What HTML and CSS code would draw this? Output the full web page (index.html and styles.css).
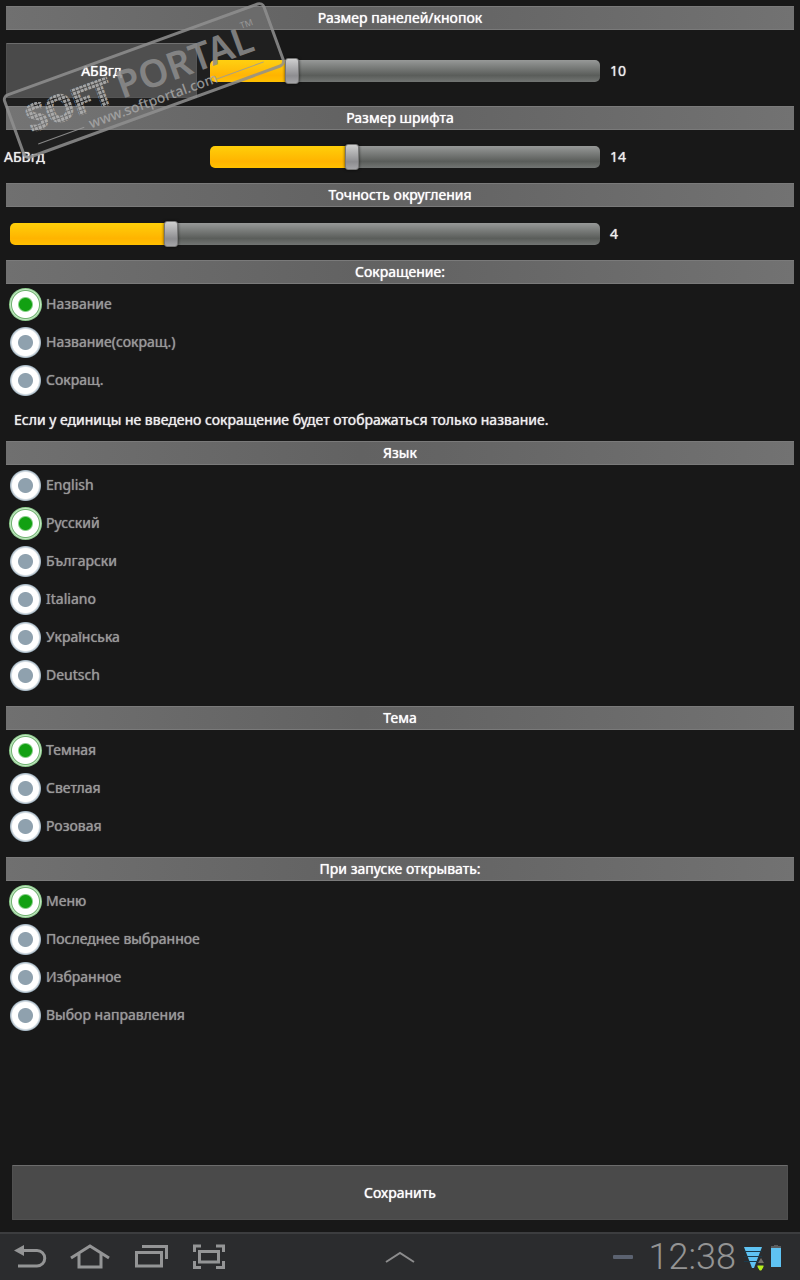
FILE: index.html
```html
<!DOCTYPE html>
<html lang="ru">
<head>
    <meta charset="UTF-8">
    <meta name="viewport" content="width=device-width, initial-scale=1.0">
    <title>Настройки</title>
    <link rel="stylesheet" href="styles.css">
</head>
<body>
    <form class="settings">
        <h2>Размер панелей/кнопок</h2>
        <div class="slider-row tall">
            <button type="button" class="btn sample">АБВгд</button>
            <input type="range" id="panelSize" aria-label="Размер панелей/кнопок" min="5" max="30" value="10" style="--fill: 20%">
            <output for="panelSize">10</output>
        </div>

        <h2>Размер шрифта</h2>
        <div class="slider-row">
            <span class="sample-text">АБВгд</span>
            <input type="range" id="fontSize" aria-label="Размер шрифта" min="5" max="30" value="14" style="--fill: 36%">
            <output for="fontSize">14</output>
        </div>

        <h2>Точность округления</h2>
        <div class="slider-row wide">
            <input type="range" id="precision" aria-label="Точность округления" min="0" max="15" value="4" style="--fill: 27%">
            <output for="precision">4</output>
        </div>

        <h2>Сокращение:</h2>
        <div class="radio-group">
            <label><input type="radio" name="short" checked>Название</label>
            <label><input type="radio" name="short">Название(сокращ.)</label>
            <label><input type="radio" name="short">Сокращ.</label>
        </div>
        <p class="note">Если у единицы не введено сокращение будет отображаться только название.</p>

        <h2>Язык</h2>
        <div class="radio-group spaced">
            <label><input type="radio" name="lang">English</label>
            <label><input type="radio" name="lang" checked>Русский</label>
            <label><input type="radio" name="lang">Български</label>
            <label><input type="radio" name="lang">Italiano</label>
            <label><input type="radio" name="lang">Українська</label>
            <label><input type="radio" name="lang">Deutsch</label>
        </div>

        <h2>Тема</h2>
        <div class="radio-group spaced">
            <label><input type="radio" name="theme" checked>Темная</label>
            <label><input type="radio" name="theme">Светлая</label>
            <label><input type="radio" name="theme">Розовая</label>
        </div>

        <h2>При запуске открывать:</h2>
        <div class="radio-group">
            <label><input type="radio" name="start" checked>Меню</label>
            <label><input type="radio" name="start">Последнее выбранное</label>
            <label><input type="radio" name="start">Избранное</label>
            <label><input type="radio" name="start">Выбор направления</label>
        </div>

        <button type="submit" class="btn save">Сохранить</button>
    </form>

    <nav class="system-bar">
        <div class="nav-keys">
            <button type="button" aria-label="Назад">
                <svg width="40" height="32" viewBox="0 0 40 32">
                    <path d="M13 9.500H27a7.500 7.500 0 0 1 0 15.500H8" fill="none" stroke="#949596" stroke-width="3"/>
                    <path d="M4 9.500L14 4V15Z" fill="#949596"/>
                </svg>
            </button>
            <button type="button" aria-label="Домой">
                <svg width="40" height="32" viewBox="0 0 40 32">
                    <path d="M1 17L20 5L39 17M9 13V26H31V13" fill="none" stroke="#949596" stroke-width="3"/>
                </svg>
            </button>
            <button type="button" aria-label="Недавние">
                <svg width="40" height="32" viewBox="0 0 40 32">
                    <path d="M6.500 11.500H31.500V25H6.500ZM12 5.500H36.500V18" fill="none" stroke="#949596" stroke-width="3"/>
                </svg>
            </button>
            <button type="button" aria-label="Снимок экрана">
                <svg width="40" height="32" viewBox="0 0 40 32">
                    <path d="M9.500 10.500H28.500V21H9.500Z" fill="none" stroke="#949596" stroke-width="3"/>
                    <path d="M4.500 11V5H11M26 5H33.500V11M33.500 20V26.500H26M11 26.500H4.500V20" fill="none" stroke="#949596" stroke-width="3"/>
                </svg>
            </button>
        </div>
        <button type="button" class="up" aria-label="Вверх">
            <svg width="32" height="16" viewBox="0 0 32 16">
                <path d="M2 13L16 4L30 13" fill="none" stroke="#8c8c8d" stroke-width="2"/>
            </svg>
        </button>
        <div class="status">
            <span class="dash"></span>
            <time>12:38</time>
            <svg width="21" height="28" viewBox="0 0 21 28">
                <path d="M0 4H18L10 25H8Z" fill="#5fc3f3"/>
                <path d="M0 8.500H18M0 13.500H18M0 18.500H18" stroke="#1c3a4a" stroke-width="1"/>
                <path d="M14 20L17 15L20 20Z" fill="#77706a"/>
                <path d="M13 22H20V24L17.500 28H15.500L13 24Z" fill="#b8ee1c" stroke="#2b2c2e" stroke-width="1"/>
            </svg>
            <svg width="12" height="28" viewBox="0 0 12 28">
                <path d="M1 5V3H4V2H8V3H11V5Z" fill="#5b5c5e"/>
                <path d="M1 5H11V24H1Z" fill="#5fc3f3"/>
            </svg>
        </div>
    </nav>

    <!-- watermark -->
    <svg class="stamp" width="300" height="180" viewBox="0 0 300 180">
        <defs>
            <pattern id="dots" width="4" height="4" patternUnits="userSpaceOnUse">
                <rect width="3" height="3" fill="#b4b4b4"/>
            </pattern>
        </defs>
        <g transform="translate(2 97) rotate(-20)">
            <rect x="1" y="0" width="276" height="66" rx="5" fill="#ffffff" fill-opacity="0.04" stroke="#909090" stroke-width="3"/>
            <text x="16" y="43" class="stamp-soft" fill="url(#dots)" stroke="url(#dots)" stroke-width="2">SOFT</text>
            <text x="112" y="43" class="stamp-portal">PORTAL</text>
            <text x="248" y="18" class="stamp-tm">TM</text>
            <text x="73" y="60" class="stamp-url">www.softportal.com</text>
            <path d="M18 56.500H67M208 56.500H258" stroke="#9c9c9c" stroke-width="1"/>
        </g>
    </svg>

    <script>
        // keep the filled part and the number in step with the thumb
        document.querySelectorAll('input[type=range]').forEach(function (el) {
            el.addEventListener('input', function () {
                var part = (el.value - el.min) / (el.max - el.min);
                el.style.setProperty('--fill', Math.round(part * 100) + '%');
                el.nextElementSibling.value = el.value;
            });
        });
    </script>
</body>
</html>
```
FILE: styles.css
```css
* {
    margin: 0;
    padding: 0;
    box-sizing: border-box;
}

body {
    display: flex;
    flex-direction: column;
    min-height: 100vh;
    background: #181818;
    color: #eee;
    font-family: "Noto Sans", "Open Sans", sans-serif;
    font-size: 14px;
    font-weight: 400;
    line-height: 20px;
    text-shadow: 0 0 1px currentColor;
}

button {
    border: none;
    background: none;
    color: inherit;
    font: inherit;
    text-shadow: inherit;
    cursor: pointer;
}

.settings {
    flex: 1;
    display: flex;
    flex-direction: column;
    padding-top: 6px;
}

h2 {
    height: 24px;
    margin: 0 6px;
    border: 1px solid #7a7a7a;
    border-width: 1px 0;
    background: linear-gradient(to right, #707070, #626262 45%, #646464 55%, #727272);
    color: #fff;
    font-size: 14px;
    font-weight: 400;
    line-height: 22px;
    text-align: center;
}

.btn {
    border: 1px solid #505050;
    border-top-color: #6c6c6c;
    border-radius: 1px;
    background: #4a4a4a;
    color: #fff;
}

/* sliders */
.slider-row {
    display: grid;
    grid-template-columns: 1fr 2fr 1fr;
    align-items: center;
    height: 53px;
}

.slider-row.tall {
    height: 76px;
    padding-top: 5px;
}

.slider-row.wide {
    grid-template-columns: 3fr 1fr;
}

.sample {
    height: 55px;
    margin: 0 3px 0 6px;
}

.sample-text {
    padding-left: 4px;
}

.slider-row output {
    padding-left: 10px;
}

input[type=range] {
    appearance: none;
    height: 22px;
    margin-left: 10px;
    border-radius: 5px;
    background:
        linear-gradient(#ffcf0a, #ffb400 70%, #ffc000) left / var(--fill) 100% no-repeat,
        linear-gradient(#979998, #5a5d5a 70%, #727573);
}

input[type=range]::-webkit-slider-thumb {
    appearance: none;
    width: 14px;
    height: 26px;
    border: 1px solid #777;
    border-radius: 3px;
    background: linear-gradient(#cfcfcf, #8d8d90 70%, #a5a5a8);
    box-shadow: 0 0 3px rgba(0,0,0,0.7);
}

/* radio lists */
.radio-group {
    padding-top: 1px;
}

.radio-group.spaced {
    padding-bottom: 12px;
}

.radio-group label {
    display: flex;
    align-items: center;
    gap: 4px;
    height: 38px;
    padding-left: 9px;
    color: #999;
}

input[type=radio] {
    appearance: none;
    width: 33px;
    height: 33px;
    border-radius: 50%;
    background: radial-gradient(circle closest-side, #8fa1ae 7px, #fff 8px, #fff 13px, #a9bac6 15px, #181818 16px);
}

input[type=radio]:checked {
    background: radial-gradient(circle closest-side, #12a012 6px, #fff 8px, #fff 13px, #6fb26f 14px, #c4e6c4 15px, #8fcf8f 16px);
}

.note {
    padding: 11px 14px;
}

.save {
    height: 55px;
    margin: auto 12px 12px;
}

/* bottom system bar */
.system-bar {
    display: grid;
    grid-template-columns: 1fr auto 1fr;
    align-items: center;
    height: 48px;
    border-top: 2px solid #3c3d3f;
    background: #2b2c2e;
    text-shadow: none;
}

.system-bar svg {
    display: block;
}

.nav-keys {
    display: flex;
    gap: 20px;
    padding-left: 10px;
}

.status {
    display: flex;
    align-items: center;
    justify-content: flex-end;
    gap: 8px;
    padding-right: 18px;
}

.status svg + svg {
    margin-left: -3px;
}

.dash {
    width: 20px;
    height: 4px;
    margin-right: 8px;
    border-radius: 1px;
    background: #5b6270;
}

time {
    color: #949494;
    font-family: Roboto, "Liberation Sans", sans-serif;
    font-size: 36px;
    font-weight: 300;
    line-height: 40px;
}

/* watermark */
.stamp {
    position: absolute;
    top: 0;
    left: 0;
    opacity: 0.85;
    text-shadow: none;
    pointer-events: none;
}

.stamp-soft {
    font-size: 36px;
    font-weight: 700;
}

.stamp-portal {
    fill: #8e8e8e;
    font-size: 38px;
    font-weight: 600;
}

.stamp-url {
    fill: #a8a8a8;
    font-size: 14px;
    font-weight: 500;
}

.stamp-tm {
    fill: #a0a0a0;
    font-size: 9px;
}
```
